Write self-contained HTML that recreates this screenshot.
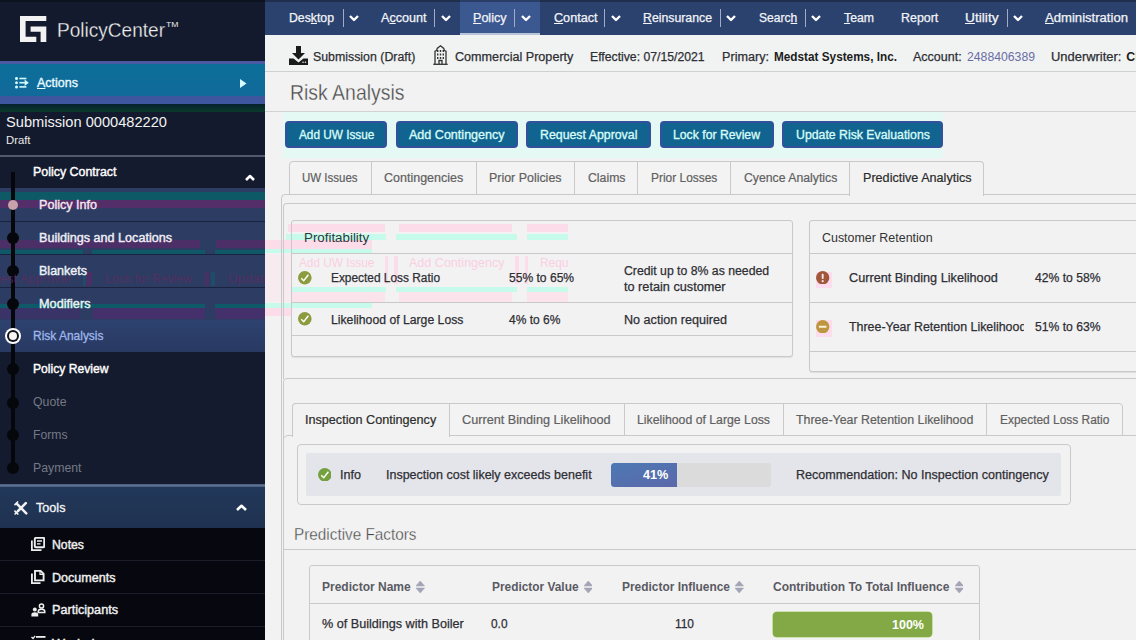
<!DOCTYPE html>
<html><head><meta charset="utf-8"><title>PolicyCenter</title>
<style>
*{box-sizing:border-box;margin:0;padding:0}
html,body{width:1136px;height:640px;overflow:hidden;background:#f2f2f2;font-family:"Liberation Sans",sans-serif}
.a{position:absolute}
.t{position:absolute;white-space:nowrap;line-height:1;transform-origin:0 0}
u{text-decoration-thickness:1px;text-underline-offset:1px}
</style></head><body>
<div class="a" style="left:0px;top:0px;width:265px;height:640px;background:#141a2d"></div>
<svg class="a" style="left:20px;top:16px" width="27" height="27" viewBox="0 0 27 27"><path fill="#f2f2f2" d="M0 0H26.3V5H5.6V20.7H16.3V26H0Z"/><path fill="#f2f2f2" d="M10.6 10.6H26.3V26H20.6V15.7H10.6Z"/></svg>
<div class="a" style="left:0px;top:61px;width:265px;height:42.8px;background:linear-gradient(#4a5aa2,#4a5aa2 3px,#3d569e 3px)"></div>
<div class="a" style="left:0px;top:63.5px;width:265px;height:32.3px;background:linear-gradient(#0c6f99,#11699a)"></div>
<div class="a" style="left:0px;top:103.8px;width:265px;height:8.5px;background:linear-gradient(#05212d,#0a3a2c)"></div>
<svg class="a" style="left:15px;top:77.2px" width="14" height="11.4" viewBox="0 0 14 11.4"><g fill="#d4fbff"><circle cx="1.5" cy="1.5" r="1.5"/><circle cx="1.5" cy="5.7" r="1.5"/><circle cx="1.5" cy="9.9" r="1.5"/><rect x="4.4" y=".7" width="7" height="1.6"/><rect x="4.4" y="9.1" width="7" height="1.6"/><rect x="4.4" y="4.9" width="5.5" height="1.6"/><path d="M9.6 2.4L13.8 5.7L9.6 9Z"/></g></svg>
<svg class="a" style="left:239.5px;top:79px" width="7" height="9" viewBox="0 0 7 9"><path fill="#d8fbff" d="M0 0L6.5 4.5L0 9Z"/></svg>
<div class="a" style="left:0px;top:154.5px;width:265px;height:2.5px;background:linear-gradient(#3c4358,#676e86 50%,#3c4358)"></div>
<div class="a" style="left:0px;top:157px;width:265px;height:31px;background:#151b2e"></div>
<svg class="a" style="left:244.5px;top:174px" width="10" height="7" viewBox="0 0 10 7"><path fill="none" stroke="#fff" stroke-width="2.5" stroke-linejoin="round" d="M1 6L5 2L9 6"/></svg>
<div class="a" style="left:0px;top:188px;width:265px;height:132px;background:#2d3c63"></div>
<div class="a" style="left:0px;top:191.5px;width:265px;height:8.8px;background:#0e5966"></div>
<div class="a" style="left:0px;top:200.3px;width:265px;height:8.0px;background:#532e68"></div>
<div class="a" style="left:0px;top:240.3px;width:200px;height:7.5px;background:#4d2f68"></div>
<div class="a" style="left:216px;top:240.3px;width:49px;height:7.5px;background:#4d2f68"></div>
<div class="a" style="left:0px;top:249.5px;width:82.5px;height:5.5px;background:#0f5868"></div>
<div class="a" style="left:92px;top:249.5px;width:113px;height:5.5px;background:#0f5868"></div>
<div class="a" style="left:214.5px;top:249.5px;width:50.5px;height:5.5px;background:#0f5868"></div>
<div class="a" style="left:0px;top:303.5px;width:205px;height:4.5px;background:#0f5a68"></div>
<div class="a" style="left:215px;top:303.5px;width:50px;height:4.5px;background:#0f5a68"></div>
<div class="a" style="left:0px;top:308px;width:80px;height:10.8px;background:#3a3368"></div>
<div class="a" style="left:92.5px;top:308px;width:112.5px;height:10.8px;background:#44306a"></div>
<div class="a" style="left:215px;top:308px;width:50px;height:10.8px;background:#44306a"></div>
<div class="a" style="left:0px;top:220.5px;width:265px;height:1.5px;background:#19223f"></div>
<div class="a" style="left:0px;top:253.5px;width:265px;height:1.5px;background:#19223f"></div>
<div class="a" style="left:0px;top:286.5px;width:265px;height:1.5px;background:#19223f"></div>
<div class="a" style="left:0px;top:320px;width:265px;height:32px;background:linear-gradient(#2e426f,#283a62)"></div>
<div class="a" style="left:0px;top:352px;width:265px;height:132px;background:#141b2e"></div>
<div class="a" style="left:82.5px;top:272px;width:3.5px;height:14px;background:#1f4c68"></div>
<div class="a" style="left:86px;top:272px;width:6px;height:14px;background:#4a2f66"></div>
<div class="a" style="left:205px;top:272px;width:4px;height:14px;background:#4a2f66"></div>
<div class="a" style="left:211px;top:272px;width:4px;height:14px;background:#1f4c68"></div>
<div class="a" style="left:11.3px;top:172px;width:3.7px;height:298px;background:#06070b"></div>
<div class="a" style="left:8px;top:200px;width:10px;height:10px;border-radius:50%;background:#c9a1ab"></div>
<div class="a" style="left:7px;top:231.5px;width:12px;height:12px;border-radius:50%;background:#06070b"></div>
<div class="a" style="left:7px;top:264.5px;width:12px;height:12px;border-radius:50%;background:#06070b"></div>
<div class="a" style="left:7px;top:298px;width:12px;height:12px;border-radius:50%;background:#06070b"></div>
<div class="a" style="left:7px;top:363px;width:12px;height:12px;border-radius:50%;background:#06070b"></div>
<div class="a" style="left:7px;top:396.5px;width:12px;height:12px;border-radius:50%;background:#06070b"></div>
<div class="a" style="left:7px;top:429px;width:12px;height:12px;border-radius:50%;background:#06070b"></div>
<div class="a" style="left:7px;top:462px;width:12px;height:12px;border-radius:50%;background:#06070b"></div>
<div class="a" style="left:5px;top:328px;width:16px;height:16px;border-radius:50%;background:#fff"></div>
<div class="a" style="left:7px;top:330px;width:12px;height:12px;border-radius:50%;background:#10131c"></div>
<div class="a" style="left:9px;top:332px;width:8px;height:8px;border-radius:50%;background:#f4f4f4"></div>
<div class="a" style="left:0px;top:483.8px;width:265px;height:3.2px;background:linear-gradient(#485b7c,#5c7092 50%,#485b7c)"></div>
<div class="a" style="left:0px;top:487px;width:265px;height:41px;background:linear-gradient(#22385a,#1f3150)"></div>
<svg class="a" style="left:14px;top:500.5px" width="14" height="14" viewBox="0 0 14 14"><g stroke="#f2f2f2" stroke-width="2.5" stroke-linecap="round" fill="none"><path d="M3.2 3.2L12.3 12.3"/><path d="M11.8 2.2L4 10"/></g><g stroke="#f2f2f2" stroke-width="1.7" stroke-linecap="round" fill="none"><path d="M1 3.6L3.6 1"/><path d="M1 10.2L3.8 13"/><path d="M1.2 12.8L4 10"/></g></svg>
<svg class="a" style="left:236.3px;top:504.3px" width="11" height="7" viewBox="0 0 11 7"><path fill="none" stroke="#fff" stroke-width="2.6" stroke-linejoin="round" d="M1 6L5.5 1.8L10 6"/></svg>
<div class="a" style="left:0px;top:528px;width:265px;height:112px;background:#07080f"></div>
<div class="a" style="left:0px;top:560.0px;width:265px;height:1.0px;background:#1b1d2b"></div>
<div class="a" style="left:0px;top:593.0px;width:265px;height:1.0px;background:#1b1d2b"></div>
<div class="a" style="left:0px;top:626.0px;width:265px;height:1.0px;background:#1b1d2b"></div>
<svg class="a" style="left:31px;top:537px" width="14" height="14" viewBox="0 0 14 14"><g fill="none" stroke="#eee" stroke-width="1.9"><rect x="3.8" y=".8" width="9.4" height="9.4" rx="1"/><path d="M.8 3.5V13.2H10.5"/><path d="M6 4H11M6 6.8H9.5" stroke-width="1.3"/></g></svg>
<svg class="a" style="left:31px;top:570px" width="14" height="14" viewBox="0 0 14 14"><g fill="none" stroke="#eee" stroke-width="1.9"><path d="M4 .8H9.5L12.6 3.9V10.4H4Z"/><path d="M.9 3.5V13.2H9.5"/><path d="M9 1V4.4H12.4" stroke-width="1.2"/></g></svg>
<svg class="a" style="left:31px;top:603px" width="15" height="14" viewBox="0 0 15 14"><g fill="none" stroke="#eee" stroke-width="1.5"><circle cx="10.5" cy="3" r="2.1"/><path d="M7.2 9.6V8.6C7.2 7 8.6 6.2 10.5 6.2S13.8 7 13.8 8.6V9.6Z"/></g><g fill="#eee"><circle cx="3.8" cy="6.6" r="2"/><path d="M.4 13.4V11.6C.4 10 1.9 9.2 3.8 9.2S7.2 10 7.2 11.6V13.4Z"/></g></svg>
<svg class="a" style="left:31px;top:635px" width="15" height="8" viewBox="0 0 15 8"><g fill="#eee"><rect x="5" y="1" width="9.5" height="1.8"/><path d="M0 2.5L1 1.5L2 2.6L3.6 .5L4.6 1.3L2.1 4.5Z"/></g></svg>
<div class="a" style="left:265px;top:0px;width:871px;height:35px;background:#2c426e"></div>
<div class="a" style="left:460px;top:0px;width:79.5px;height:35px;background:#3b5891"></div>
<div class="a" style="left:460px;top:32.5px;width:79.5px;height:2.5px;background:#b9c4d8"></div>
<div class="a" style="left:342.8px;top:9px;width:1.0px;height:17.5px;background:#a3acc4"></div>
<svg class="a" style="left:349px;top:14.5px" width="10" height="7" viewBox="0 0 10 7"><path fill="none" stroke="#fff" stroke-width="2.4" stroke-linejoin="round" d="M1 1L5 5L9 1"/></svg>
<div class="a" style="left:434.3px;top:9px;width:1.0px;height:17.5px;background:#a3acc4"></div>
<svg class="a" style="left:441px;top:14.5px" width="10" height="7" viewBox="0 0 10 7"><path fill="none" stroke="#fff" stroke-width="2.4" stroke-linejoin="round" d="M1 1L5 5L9 1"/></svg>
<div class="a" style="left:514.3px;top:9px;width:1.0px;height:17.5px;background:#a3acc4"></div>
<svg class="a" style="left:521.3px;top:14.5px" width="10" height="7" viewBox="0 0 10 7"><path fill="none" stroke="#fff" stroke-width="2.4" stroke-linejoin="round" d="M1 1L5 5L9 1"/></svg>
<div class="a" style="left:604.3px;top:9px;width:1.0px;height:17.5px;background:#a3acc4"></div>
<svg class="a" style="left:611px;top:14.5px" width="10" height="7" viewBox="0 0 10 7"><path fill="none" stroke="#fff" stroke-width="2.4" stroke-linejoin="round" d="M1 1L5 5L9 1"/></svg>
<div class="a" style="left:719.8px;top:9px;width:1.0px;height:17.5px;background:#a3acc4"></div>
<svg class="a" style="left:726px;top:14.5px" width="10" height="7" viewBox="0 0 10 7"><path fill="none" stroke="#fff" stroke-width="2.4" stroke-linejoin="round" d="M1 1L5 5L9 1"/></svg>
<div class="a" style="left:804.8px;top:9px;width:1.0px;height:17.5px;background:#a3acc4"></div>
<svg class="a" style="left:811px;top:14.5px" width="10" height="7" viewBox="0 0 10 7"><path fill="none" stroke="#fff" stroke-width="2.4" stroke-linejoin="round" d="M1 1L5 5L9 1"/></svg>
<div class="a" style="left:1006.8px;top:9px;width:1.0px;height:17.5px;background:#a3acc4"></div>
<svg class="a" style="left:1013.3px;top:14.5px" width="10" height="7" viewBox="0 0 10 7"><path fill="none" stroke="#fff" stroke-width="2.4" stroke-linejoin="round" d="M1 1L5 5L9 1"/></svg>
<div class="a" style="left:0px;top:0px;width:1136px;height:1.5px;background:rgba(0,0,0,.3)"></div>
<div class="a" style="left:265px;top:35px;width:871px;height:36.5px;background:#f1f3f2"></div>
<div class="a" style="left:265px;top:70.8px;width:871px;height:1.2px;background:#d0d0d0"></div>
<svg class="a" style="left:289px;top:46px" width="19" height="19" viewBox="0 0 19 19"><g fill="#1b1b1b"><path d="M7 0H12V7H16L9.5 13.5L3 7H7Z"/><path d="M0 12.5H4.6L9.5 16.4L14.4 12.5H19V19H0Z"/></g><rect x="13.4" y="15.6" width="1.3" height="1.3" fill="#f4f4f4"/><rect x="15.8" y="15.6" width="1.3" height="1.3" fill="#f4f4f4"/></svg>
<svg class="a" style="left:433px;top:45px" width="15" height="20" viewBox="0 0 15 20"><g fill="none" stroke="#333" stroke-width="1.3"><path d="M2 19.3V6.2L3.6 5.6L4.2 3.4L7.5 .8L10.8 3.4L11.4 5.6L13 6.2V19.3"/><path d="M.3 19.3H14.7"/><path d="M6 19.3V15.5H9V19.3"/></g><g fill="#333"><rect x="4" y="5" width="1.4" height="2"/><rect x="6.8" y="5" width="1.4" height="2"/><rect x="9.6" y="5" width="1.4" height="2"/><rect x="4" y="8.5" width="1.4" height="2"/><rect x="6.8" y="8.5" width="1.4" height="2"/><rect x="9.6" y="8.5" width="1.4" height="2"/><rect x="4" y="12" width="1.4" height="2"/><rect x="6.8" y="12" width="1.4" height="2"/><rect x="9.6" y="12" width="1.4" height="2"/></g></svg>
<div class="a" style="left:265px;top:111px;width:871px;height:1px;background:#d2d2d2"></div>
<div class="a" style="left:283px;top:112px;width:660px;height:46px;background:#e4f9f3"></div>
<div class="a" style="left:285px;top:121px;width:102px;height:26.5px;background:#10648f;border:2.2px solid #33509d;border-radius:4px"></div>
<div class="a" style="left:395.5px;top:121px;width:122.0px;height:26.5px;background:#10648f;border:2.2px solid #33509d;border-radius:4px"></div>
<div class="a" style="left:526px;top:121px;width:124.5px;height:26.5px;background:#10648f;border:2.2px solid #33509d;border-radius:4px"></div>
<div class="a" style="left:659.5px;top:121px;width:114.0px;height:26.5px;background:#10648f;border:2.2px solid #33509d;border-radius:4px"></div>
<div class="a" style="left:782px;top:121px;width:160.5px;height:26.5px;background:#10648f;border:2.2px solid #33509d;border-radius:4px"></div>
<div class="a" style="left:281px;top:193.5px;width:859px;height:506.5px;border:1px solid #c9c9c9;border-radius:4px 0 0 0;background:#f2f2f2"></div>
<div class="a" style="left:282.5px;top:203px;width:857.5px;height:175.5px;border:1px solid #c9c9c9;border-bottom:0;border-radius:4px 0 0 0;background:#f2f2f2"></div>
<div class="a" style="left:282.5px;top:377.5px;width:857.5px;height:322.5px;border:1px solid #c9c9c9;border-radius:4px 0 0 0;background:#f2f2f2"></div>
<div class="a" style="left:289px;top:161px;width:561px;height:33.5px;border:1px solid #c9c9c9;border-radius:4px 0 0 0;background:#f3f3f3"></div>
<div class="a" style="left:370.5px;top:161px;width:1.0px;height:33px;background:#c9c9c9"></div>
<div class="a" style="left:475.7px;top:161px;width:1.0px;height:33px;background:#c9c9c9"></div>
<div class="a" style="left:574.0px;top:161px;width:1.0px;height:33px;background:#c9c9c9"></div>
<div class="a" style="left:637.3px;top:161px;width:1.0px;height:33px;background:#c9c9c9"></div>
<div class="a" style="left:729.8px;top:161px;width:1.0px;height:33px;background:#c9c9c9"></div>
<div class="a" style="left:849.2px;top:161px;width:135.3px;height:34.5px;border:1px solid #c9c9c9;border-bottom:0;border-radius:0 4px 0 0;background:#f2f2f2"></div>
<div class="a" style="left:290.5px;top:220px;width:502.5px;height:136.5px;border:1px solid #c9c9c9;border-radius:3px;background:#f2f2f2;box-shadow:0 1px 1px rgba(0,0,0,.08)"></div>
<div class="a" style="left:287.5px;top:224px;width:97.1px;height:8px;background:#fddcea"></div>
<div class="a" style="left:287.5px;top:292px;width:97.1px;height:10px;background:#fbe3ec"></div>
<div class="a" style="left:398.7px;top:224px;width:112.9px;height:8px;background:#fddcea"></div>
<div class="a" style="left:398.7px;top:292px;width:112.9px;height:10px;background:#fbe3ec"></div>
<div class="a" style="left:527px;top:224px;width:41px;height:8px;background:#fddcea"></div>
<div class="a" style="left:527px;top:292px;width:41px;height:10px;background:#fbe3ec"></div>
<div class="a" style="left:286px;top:233.5px;width:100px;height:6.0px;background:#c6fbec"></div>
<div class="a" style="left:286px;top:287px;width:100px;height:4.8px;background:#c6fbec"></div>
<div class="a" style="left:395.6px;top:233.5px;width:121.4px;height:6.0px;background:#c6fbec"></div>
<div class="a" style="left:395.6px;top:287px;width:121.4px;height:4.8px;background:#c6fbec"></div>
<div class="a" style="left:526.6px;top:233.5px;width:41.4px;height:6.0px;background:#c6fbec"></div>
<div class="a" style="left:526.6px;top:287px;width:41.4px;height:4.8px;background:#c6fbec"></div>
<div class="a" style="left:265px;top:240px;width:107px;height:9px;background:#fddcea"></div>
<div class="a" style="left:265px;top:249px;width:107px;height:4.2px;background:#c6fbec"></div>
<div class="a" style="left:265px;top:254px;width:26px;height:48px;background:#f8ebef"></div>
<div class="a" style="left:265px;top:303.4px;width:107px;height:4.4px;background:#c6fbec"></div>
<div class="a" style="left:265px;top:308px;width:26px;height:8px;background:#fddcea"></div>
<div class="a" style="left:384.5px;top:256px;width:3.5px;height:28px;background:#fddcea"></div>
<div class="a" style="left:394px;top:256px;width:3.5px;height:28px;background:#fddcea"></div>
<div class="a" style="left:515px;top:256px;width:3.5px;height:28px;background:#fddcea"></div>
<div class="a" style="left:524.5px;top:256px;width:3.5px;height:28px;background:#fddcea"></div>
<div class="a" style="left:281px;top:200px;width:1px;height:440px;background:#c9c9c9"></div>
<div class="a" style="left:282.5px;top:208px;width:1.0px;height:164px;background:#c9c9c9"></div>
<div class="a" style="left:290.5px;top:223px;width:1.0px;height:130px;background:#c9c9c9"></div>
<div class="a" style="left:291px;top:253.0px;width:501.5px;height:1.0px;background:#c9c9c9"></div>
<div class="a" style="left:291px;top:302.0px;width:501.5px;height:1.0px;background:#c9c9c9"></div>
<div class="a" style="left:291px;top:335.0px;width:501.5px;height:1.0px;background:#c9c9c9"></div>
<svg class="a" style="left:298.0px;top:271.0px" width="13.6" height="13.6" viewBox="0 0 14 14"><circle cx="7" cy="7" r="7" fill="#8c9a40"/><path d="M3.3 7.4L5.9 10L10.7 3.9" fill="none" stroke="#fbfff4" stroke-width="1.55"/></svg>
<svg class="a" style="left:298.0px;top:312.2px" width="13.6" height="13.6" viewBox="0 0 14 14"><circle cx="7" cy="7" r="7" fill="#8c9a40"/><path d="M3.3 7.4L5.9 10L10.7 3.9" fill="none" stroke="#fbfff4" stroke-width="1.55"/></svg>
<div class="a" style="left:809px;top:220px;width:331px;height:152px;border:1px solid #c9c9c9;border-radius:3px;background:#f2f2f2;box-shadow:0 1px 1px rgba(0,0,0,.08)"></div>
<div class="a" style="left:809.5px;top:253.0px;width:326.5px;height:1.0px;background:#c9c9c9"></div>
<div class="a" style="left:809.5px;top:302.0px;width:326.5px;height:1.0px;background:#c9c9c9"></div>
<div class="a" style="left:809.5px;top:350.5px;width:326.5px;height:1.0px;background:#c9c9c9"></div>
<div class="a" style="left:816px;top:271.5px;width:16px;height:16.5px;background:#fddcee"></div>
<div class="a" style="left:816px;top:320px;width:16px;height:16.5px;background:#fddcee"></div>
<svg class="a" style="left:816.2px;top:271px" width="13.4" height="13.4" viewBox="0 0 14 14"><circle cx="7" cy="7" r="7" fill="#a0583c"/><rect x="6" y="2.8" width="2" height="5.6" rx=".8" fill="#fbe6e6"/><circle cx="7" cy="10.6" r="1.1" fill="#fbe6e6"/></svg>
<svg class="a" style="left:816.2px;top:320px" width="13.4" height="13.4" viewBox="0 0 14 14"><circle cx="7" cy="7" r="7" fill="#bd9740"/><rect x="3" y="5.9" width="8" height="2.2" rx=".5" fill="#fdf0dd"/></svg>
<div class="a" style="left:283px;top:435px;width:857px;height:265px;border:1px solid #c9c9c9;border-radius:5px 0 0 0;background:#f2f2f2"></div>
<div class="a" style="left:292px;top:403px;width:831px;height:33px;border:1px solid #c9c9c9;border-radius:4px 4px 0 0;background:#f3f3f3"></div>
<div class="a" style="left:292px;top:403px;width:157.5px;height:34px;border:1px solid #c9c9c9;border-bottom:0;border-radius:4px 0 0 0;background:#f2f2f2"></div>
<div class="a" style="left:623.9px;top:404px;width:1.0px;height:31.5px;background:#c9c9c9"></div>
<div class="a" style="left:782.5px;top:404px;width:1.0px;height:31.5px;background:#c9c9c9"></div>
<div class="a" style="left:986.1px;top:404px;width:1.0px;height:31.5px;background:#c9c9c9"></div>
<div class="a" style="left:297px;top:444px;width:773.5px;height:61px;border:1px solid #c9c9c9;border-radius:4px;background:#f2f2f2"></div>
<div class="a" style="left:306px;top:453px;width:755px;height:42.5px;background:#e4e5ea;border-radius:2px"></div>
<svg class="a" style="left:317.9px;top:467.5px" width="13.6" height="13.6" viewBox="0 0 14 14"><circle cx="7" cy="7" r="7" fill="#74a040"/><path d="M3.3 7.4L5.9 10L10.7 3.9" fill="none" stroke="#fbfff4" stroke-width="1.55"/></svg>
<div class="a" style="left:611px;top:462.5px;width:159.5px;height:24.5px;background:#dbdbdb;border-radius:3px"></div>
<div class="a" style="left:611px;top:462.5px;width:65.5px;height:24.5px;background:linear-gradient(165deg,#4d79b3,#5b68aa);border-radius:3.5px 0 0 3.5px"></div>
<div class="a" style="left:283px;top:549px;width:853px;height:1px;background:#c9c9c9"></div>
<div class="a" style="left:309px;top:564.5px;width:671px;height:95.5px;border:1px solid #c9c9c9;border-radius:3px 3px 0 0;background:#f2f2f2"></div>
<div class="a" style="left:309.5px;top:603px;width:670.0px;height:1px;background:#c9c9c9"></div>
<svg class="a" style="left:416.3px;top:581.2px" width="8.5" height="12" viewBox="0 0 8.5 12"><path d="M4.25 0L8.5 4.9H0Z M4.25 12L8.5 7.1H0Z" fill="#a3a5b6" stroke="#a3a5b6" stroke-width=".6" stroke-linejoin="round"/></svg>
<svg class="a" style="left:583.5px;top:581.2px" width="8.5" height="12" viewBox="0 0 8.5 12"><path d="M4.25 0L8.5 4.9H0Z M4.25 12L8.5 7.1H0Z" fill="#a3a5b6" stroke="#a3a5b6" stroke-width=".6" stroke-linejoin="round"/></svg>
<svg class="a" style="left:735px;top:581.2px" width="8.5" height="12" viewBox="0 0 8.5 12"><path d="M4.25 0L8.5 4.9H0Z M4.25 12L8.5 7.1H0Z" fill="#a3a5b6" stroke="#a3a5b6" stroke-width=".6" stroke-linejoin="round"/></svg>
<svg class="a" style="left:954.5px;top:581.2px" width="8.5" height="12" viewBox="0 0 8.5 12"><path d="M4.25 0L8.5 4.9H0Z M4.25 12L8.5 7.1H0Z" fill="#a3a5b6" stroke="#a3a5b6" stroke-width=".6" stroke-linejoin="round"/></svg>
<div class="a" style="left:772.6px;top:612px;width:159.9px;height:24.5px;background:#82a945;border-radius:4px;box-shadow:0 0 0 .6px #a5d06c"></div>
<span class="t" style="left:57px;top:19.38px;font-size:21px;color:#f0f0f0;font-weight:400;transform:scaleX(0.9071);-webkit-text-stroke:.3px #141a2d;">PolicyCenter</span>
<span class="t" style="left:166px;top:21.14px;font-size:8px;color:#e8e8e8;font-weight:400;transform:scaleX(1.0811);">TM</span>
<span class="t" style="left:37px;top:76.83px;font-size:12.8px;color:#e6fbff;font-weight:400;transform:scaleX(0.9766);-webkit-text-stroke:.35px #e6fbff;"><u>A</u>ctions</span>
<span class="t" style="left:6px;top:113.73px;font-size:15.5px;color:#f2f2f2;font-weight:400;transform:scaleX(0.9435);">Submission 0000482220</span>
<span class="t" style="left:6px;top:135.05px;font-size:11.3px;color:#e8e8e8;font-weight:400;transform:scaleX(1.0006);">Draft</span>
<span class="t" style="left:32.5px;top:166.47px;font-size:12.5px;color:#fff;font-weight:400;transform:scaleX(0.9933);-webkit-text-stroke:.4px #fff;">Policy Contract</span>
<span class="t" style="left:0px;top:272.23px;font-size:13px;color:#5e2c62;font-weight:400;transform:scaleX(0.9784);opacity:.75;">est Approval</span>
<span class="t" style="left:105px;top:272.23px;font-size:13px;color:#5e2c62;font-weight:400;transform:scaleX(0.9407);opacity:.75;">Lock for Review</span>
<div class="a" style="left:0;top:0;width:265px;height:640px;overflow:hidden"><span class="t" style="left:228px;top:272.23px;font-size:13px;color:#5e2c62;font-weight:400;transform:scaleX(1.0168);opacity:.75;">Update Risk</span></div>
<span class="t" style="left:39px;top:199.07px;font-size:12.3px;color:#f3e6f0;font-weight:400;transform:scaleX(1.0223);-webkit-text-stroke:.4px #f3e6f0;">Policy Info</span>
<span class="t" style="left:39px;top:231.57px;font-size:12.3px;color:#f0eef6;font-weight:400;transform:scaleX(1.0238);-webkit-text-stroke:.4px #f0eef6;">Buildings and Locations</span>
<span class="t" style="left:39px;top:264.57px;font-size:12.3px;color:#eef2f8;font-weight:400;transform:scaleX(1.0176);-webkit-text-stroke:.4px #eef2f8;">Blankets</span>
<span class="t" style="left:39px;top:298.07px;font-size:12.3px;color:#e4f6f4;font-weight:400;transform:scaleX(1.0323);-webkit-text-stroke:.4px #e4f6f4;">Modifiers</span>
<span class="t" style="left:32.5px;top:329.98px;font-size:12.5px;color:#9fb6ea;font-weight:400;transform:scaleX(0.9574);-webkit-text-stroke:.3px #9fb6ea;">Risk Analysis</span>
<span class="t" style="left:32.5px;top:362.98px;font-size:12.5px;color:#fff;font-weight:400;transform:scaleX(0.9703);-webkit-text-stroke:.4px #fff;">Policy Review</span>
<span class="t" style="left:32.5px;top:396.48px;font-size:12.5px;color:#747985;font-weight:400;transform:scaleX(0.9835);">Quote</span>
<span class="t" style="left:32.5px;top:428.98px;font-size:12.5px;color:#747985;font-weight:400;transform:scaleX(0.9740);">Forms</span>
<span class="t" style="left:32.5px;top:461.98px;font-size:12.5px;color:#747985;font-weight:400;transform:scaleX(0.9829);">Payment</span>
<span class="t" style="left:36px;top:501.73px;font-size:12.6px;color:#f4f4f4;font-weight:400;transform:scaleX(1.0032);-webkit-text-stroke:.3px #f4f4f4;">Tools</span>
<span class="t" style="left:52px;top:538.57px;font-size:12.3px;color:#f0f0f0;font-weight:400;transform:scaleX(0.9961);-webkit-text-stroke:.4px #f0f0f0;">Notes</span>
<span class="t" style="left:52px;top:571.57px;font-size:12.3px;color:#f0f0f0;font-weight:400;transform:scaleX(1.0208);-webkit-text-stroke:.4px #f0f0f0;">Documents</span>
<span class="t" style="left:52px;top:604.47px;font-size:12.3px;color:#f0f0f0;font-weight:400;transform:scaleX(1.0272);-webkit-text-stroke:.4px #f0f0f0;">Participants</span>
<span class="t" style="left:52px;top:638.27px;font-size:12.3px;color:#f0f0f0;font-weight:400;transform:scaleX(1.1215);-webkit-text-stroke:.4px #f0f0f0;">Workplan</span>
<span class="t" style="left:289px;top:12.07px;font-size:12.3px;color:#f2f4f8;font-weight:400;transform:scaleX(0.9969);-webkit-text-stroke:.25px #f2f4f8;">Des<u>k</u>top</span>
<span class="t" style="left:381px;top:12.07px;font-size:12.3px;color:#f2f4f8;font-weight:400;transform:scaleX(1.0236);-webkit-text-stroke:.25px #f2f4f8;">A<u>c</u>count</span>
<span class="t" style="left:473px;top:12.07px;font-size:12.3px;color:#f2f4f8;font-weight:400;transform:scaleX(1.0210);-webkit-text-stroke:.25px #f2f4f8;"><u>P</u>olicy</span>
<span class="t" style="left:553.5px;top:12.07px;font-size:12.3px;color:#f2f4f8;font-weight:400;transform:scaleX(1.0262);-webkit-text-stroke:.25px #f2f4f8;"><u>C</u>ontact</span>
<span class="t" style="left:643px;top:12.07px;font-size:12.3px;color:#f2f4f8;font-weight:400;transform:scaleX(0.9991);-webkit-text-stroke:.25px #f2f4f8;"><u>R</u>einsurance</span>
<span class="t" style="left:758.7px;top:12.07px;font-size:12.3px;color:#f2f4f8;font-weight:400;transform:scaleX(0.9828);-webkit-text-stroke:.25px #f2f4f8;">Searc<u>h</u></span>
<span class="t" style="left:843.5px;top:12.07px;font-size:12.3px;color:#f2f4f8;font-weight:400;transform:scaleX(0.9974);-webkit-text-stroke:.25px #f2f4f8;"><u>T</u>eam</span>
<span class="t" style="left:900.7px;top:12.07px;font-size:12.3px;color:#f2f4f8;font-weight:400;transform:scaleX(1.0102);-webkit-text-stroke:.25px #f2f4f8;">Report</span>
<span class="t" style="left:965px;top:12.07px;font-size:12.3px;color:#f2f4f8;font-weight:400;transform:scaleX(1.1171);-webkit-text-stroke:.25px #f2f4f8;"><u>U</u>tility</span>
<span class="t" style="left:1045px;top:12.07px;font-size:12.3px;color:#f2f4f8;font-weight:400;transform:scaleX(1.0652);-webkit-text-stroke:.25px #f2f4f8;"><u>A</u>dministration</span>
<span class="t" style="left:312.7px;top:50.68px;font-size:12.5px;color:#2e2e34;-webkit-text-stroke:.25px #2e2e34;font-weight:400;transform:scaleX(0.9884);">Submission (Draft)</span>
<span class="t" style="left:455px;top:50.68px;font-size:12.5px;color:#2e2e34;-webkit-text-stroke:.25px #2e2e34;font-weight:400;transform:scaleX(1.0086);">Commercial Property</span>
<span class="t" style="left:590px;top:50.68px;font-size:12.5px;color:#2e2e34;-webkit-text-stroke:.25px #2e2e34;font-weight:400;transform:scaleX(0.9777);">Effective: 07/15/2021</span>
<span class="t" style="left:722px;top:50.68px;font-size:12.5px;color:#2e2e34;-webkit-text-stroke:.25px #2e2e34;font-weight:400;transform:scaleX(1.0101);">Primary:</span>
<span class="t" style="left:774px;top:50.68px;font-size:12.5px;color:#1c1c1c;font-weight:700;transform:scaleX(0.9417);">Medstat Systems, Inc.</span>
<span class="t" style="left:913.4px;top:50.68px;font-size:12.5px;color:#2e2e34;-webkit-text-stroke:.25px #2e2e34;font-weight:400;transform:scaleX(0.9992);">Account:</span>
<span class="t" style="left:966.7px;top:50.68px;font-size:12.5px;color:#6a6ea6;font-weight:400;transform:scaleX(0.9780);">2488406389</span>
<span class="t" style="left:1051px;top:50.68px;font-size:12.5px;color:#2e2e34;-webkit-text-stroke:.25px #2e2e34;font-weight:400;transform:scaleX(1.0341);">Underwriter:</span>
<span class="t" style="left:1126.3px;top:50.77px;font-size:12.3px;color:#1c1c1c;font-weight:700;transform:scaleX(1.0000);">Cl</span>
<span class="t" style="left:289.5px;top:83.44px;font-size:21.5px;color:#484848;font-weight:400;transform:scaleX(0.9040);-webkit-text-stroke:.35px #f2f2f2;">Risk Analysis</span>
<span class="t" style="left:298.5px;top:128.97px;font-size:12.3px;color:#d6fbf6;font-weight:400;transform:scaleX(0.9581);-webkit-text-stroke:.35px #d6fbf6;">Add UW Issue</span>
<span class="t" style="left:409px;top:128.97px;font-size:12.3px;color:#d6fbf6;font-weight:400;transform:scaleX(1.0208);-webkit-text-stroke:.35px #d6fbf6;">Add Contingency</span>
<span class="t" style="left:539.6px;top:128.97px;font-size:12.3px;color:#d6fbf6;font-weight:400;transform:scaleX(1.0033);-webkit-text-stroke:.35px #d6fbf6;">Request Approval</span>
<span class="t" style="left:673px;top:128.97px;font-size:12.3px;color:#d6fbf6;font-weight:400;transform:scaleX(0.9945);-webkit-text-stroke:.35px #d6fbf6;">Lock for Review</span>
<span class="t" style="left:795.6px;top:128.97px;font-size:12.3px;color:#d6fbf6;font-weight:400;transform:scaleX(0.9994);-webkit-text-stroke:.35px #d6fbf6;">Update Risk Evaluations</span>
<span class="t" style="left:302.4px;top:172.38px;font-size:12.5px;color:#606060;-webkit-text-stroke:.2px #606060;font-weight:400;transform:scaleX(0.9200);">UW Issues</span>
<span class="t" style="left:384px;top:172.38px;font-size:12.5px;color:#606060;-webkit-text-stroke:.2px #606060;font-weight:400;transform:scaleX(0.9998);">Contingencies</span>
<span class="t" style="left:489.3px;top:172.38px;font-size:12.5px;color:#606060;-webkit-text-stroke:.2px #606060;font-weight:400;transform:scaleX(0.9940);">Prior Policies</span>
<span class="t" style="left:587.5px;top:172.38px;font-size:12.5px;color:#606060;-webkit-text-stroke:.2px #606060;font-weight:400;transform:scaleX(0.9816);">Claims</span>
<span class="t" style="left:651px;top:172.38px;font-size:12.5px;color:#606060;-webkit-text-stroke:.2px #606060;font-weight:400;transform:scaleX(0.9542);">Prior Losses</span>
<span class="t" style="left:743.7px;top:172.38px;font-size:12.5px;color:#606060;-webkit-text-stroke:.2px #606060;font-weight:400;transform:scaleX(0.9802);">Cyence Analytics</span>
<span class="t" style="left:862.7px;top:172.38px;font-size:12.5px;color:#2b2b2b;-webkit-text-stroke:.2px #2b2b2b;font-weight:400;transform:scaleX(1.0085);">Predictive Analytics</span>
<span class="t" style="left:298.5px;top:257.47px;font-size:12.3px;color:#fbcfe2;font-weight:400;transform:scaleX(0.9581);">Add UW Issue</span>
<span class="t" style="left:409px;top:257.47px;font-size:12.3px;color:#fbcfe2;font-weight:400;transform:scaleX(1.0208);">Add Contingency</span>
<span class="t" style="left:539.6px;top:257.47px;font-size:12.3px;color:#fbcfe2;font-weight:400;transform:scaleX(0.9658);">Requ</span>
<span class="t" style="left:304.3px;top:231.97px;font-size:12.3px;color:#2b3a3a;font-weight:400;transform:scaleX(1.0841);">Profitability</span>
<span class="t" style="left:331.2px;top:272.38px;font-size:12.5px;color:#2e2e34;-webkit-text-stroke:.25px #2e2e34;font-weight:400;transform:scaleX(0.9507);">Expected Loss Ratio</span>
<span class="t" style="left:508.9px;top:272.38px;font-size:12.5px;color:#2e2e34;-webkit-text-stroke:.25px #2e2e34;font-weight:400;transform:scaleX(0.9656);">55% to 65%</span>
<span class="t" style="left:624.4px;top:264.88px;font-size:12.5px;color:#2e2e34;-webkit-text-stroke:.25px #2e2e34;font-weight:400;transform:scaleX(0.9802);">Credit up to 8% as needed</span>
<span class="t" style="left:624.4px;top:280.88px;font-size:12.5px;color:#2e2e34;-webkit-text-stroke:.25px #2e2e34;font-weight:400;transform:scaleX(1.0155);">to retain customer</span>
<span class="t" style="left:331.2px;top:313.68px;font-size:12.5px;color:#2e2e34;-webkit-text-stroke:.25px #2e2e34;font-weight:400;transform:scaleX(0.9770);">Likelihood of Large Loss</span>
<span class="t" style="left:508.9px;top:313.68px;font-size:12.5px;color:#2e2e34;-webkit-text-stroke:.25px #2e2e34;font-weight:400;transform:scaleX(0.9605);">4% to 6%</span>
<span class="t" style="left:624.4px;top:313.68px;font-size:12.5px;color:#2e2e34;-webkit-text-stroke:.25px #2e2e34;font-weight:400;transform:scaleX(1.0073);">No action required</span>
<span class="t" style="left:822.4px;top:231.97px;font-size:12.3px;color:#333;font-weight:400;transform:scaleX(1.0113);">Customer Retention</span>
<span class="t" style="left:849px;top:272.38px;font-size:12.5px;color:#2e2e34;-webkit-text-stroke:.25px #2e2e34;font-weight:400;transform:scaleX(1.0148);">Current Binding Likelihood</span>
<span class="t" style="left:1035.4px;top:272.38px;font-size:12.5px;color:#2e2e34;-webkit-text-stroke:.25px #2e2e34;font-weight:400;transform:scaleX(0.9730);">42% to 58%</span>
<div class="a" style="left:0;top:0;width:1023.5px;height:640px;overflow:hidden"><span class="t" style="left:849px;top:321.38px;font-size:12.5px;color:#2e2e34;-webkit-text-stroke:.25px #2e2e34;font-weight:400;transform:scaleX(0.9915);">Three-Year Retention Likelihood</span></div>
<span class="t" style="left:1035.4px;top:321.38px;font-size:12.5px;color:#2e2e34;-webkit-text-stroke:.25px #2e2e34;font-weight:400;transform:scaleX(0.9730);">51% to 63%</span>
<span class="t" style="left:305px;top:414.18px;font-size:12.5px;color:#2b2b2b;-webkit-text-stroke:.2px #2b2b2b;font-weight:400;transform:scaleX(1.0096);">Inspection Contingency</span>
<span class="t" style="left:462.4px;top:414.18px;font-size:12.5px;color:#606060;-webkit-text-stroke:.2px #606060;font-weight:400;transform:scaleX(1.0135);">Current Binding Likelihood</span>
<span class="t" style="left:637px;top:414.18px;font-size:12.5px;color:#606060;-webkit-text-stroke:.2px #606060;font-weight:400;transform:scaleX(0.9814);">Likelihood of Large Loss</span>
<span class="t" style="left:796.2px;top:414.18px;font-size:12.5px;color:#606060;-webkit-text-stroke:.2px #606060;font-weight:400;transform:scaleX(0.9915);">Three-Year Retention Likelihood</span>
<span class="t" style="left:1000px;top:414.18px;font-size:12.5px;color:#606060;-webkit-text-stroke:.2px #606060;font-weight:400;transform:scaleX(0.9542);">Expected Loss Ratio</span>
<span class="t" style="left:340px;top:469.28px;font-size:12.5px;color:#2e2e34;-webkit-text-stroke:.25px #2e2e34;font-weight:400;transform:scaleX(1.0067);">Info</span>
<span class="t" style="left:386.4px;top:469.28px;font-size:12.5px;color:#2e2e34;-webkit-text-stroke:.25px #2e2e34;font-weight:400;transform:scaleX(0.9997);">Inspection cost likely exceeds benefit</span>
<span class="t" style="left:643px;top:469.07px;font-size:12.3px;color:#fff;font-weight:700;transform:scaleX(1.0315);">41%</span>
<span class="t" style="left:796.2px;top:469.28px;font-size:12.5px;color:#2e2e34;-webkit-text-stroke:.25px #2e2e34;font-weight:400;transform:scaleX(1.0050);">Recommendation: No Inspection contingency</span>
<span class="t" style="left:293.5px;top:527.18px;font-size:15.8px;color:#484848;font-weight:400;transform:scaleX(0.9690);-webkit-text-stroke:.3px #f2f2f2;">Predictive Factors</span>
<span class="t" style="left:322.2px;top:581.07px;font-size:12.3px;color:#5a5a64;font-weight:700;transform:scaleX(0.9757);">Predictor Name</span>
<span class="t" style="left:492px;top:581.07px;font-size:12.3px;color:#5a5a64;font-weight:700;transform:scaleX(0.9661);">Predictor Value</span>
<span class="t" style="left:621.5px;top:581.07px;font-size:12.3px;color:#5a5a64;font-weight:700;transform:scaleX(0.9696);">Predictor Influence</span>
<span class="t" style="left:772.6px;top:581.07px;font-size:12.3px;color:#5a5a64;font-weight:700;transform:scaleX(0.9769);">Contribution To Total Influence</span>
<span class="t" style="left:322.2px;top:618.48px;font-size:12.5px;color:#2e2e34;-webkit-text-stroke:.25px #2e2e34;font-weight:400;transform:scaleX(1.0103);">% of Buildings with Boiler</span>
<span class="t" style="left:491px;top:618.48px;font-size:12.5px;color:#2e2e34;-webkit-text-stroke:.25px #2e2e34;font-weight:400;transform:scaleX(0.9488);">0.0</span>
<span class="t" style="left:674.7px;top:618.48px;font-size:12.5px;color:#2e2e34;-webkit-text-stroke:.25px #2e2e34;font-weight:400;transform:scaleX(0.9530);">110</span>
<span class="t" style="left:892px;top:618.77px;font-size:12.3px;color:#fff;font-weight:700;transform:scaleX(1.0174);">100%</span>
</body></html>
